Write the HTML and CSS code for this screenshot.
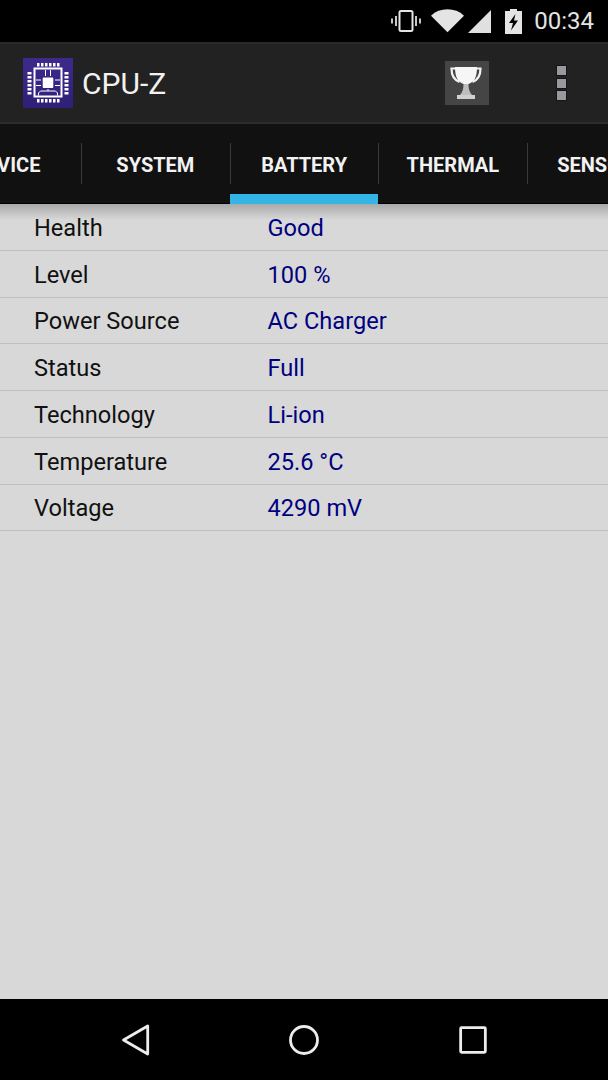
FILE: index.html
```html
<!DOCTYPE html>
<html lang="en">
<head>
<meta charset="utf-8">
<title>CPU-Z</title>
<link rel="stylesheet" href="styles.css">
</head>
<body>
<div class="screen">
  <header class="status">
    <svg class="ic-vibrate" width="32" height="24" viewBox="0 0 32 24"><rect x="9.500" y="2" width="13" height="20" rx="1.500" fill="none" stroke="#e4e4e4" stroke-width="2"/><path d="M5 7h2v10H5zM25 7h2v10h-2zM1 9.500h2v5H1zM29 9.500h2v5h-2z" fill="#c8c8c8"/></svg>
    <svg class="ic-wifi" width="33" height="24" viewBox="0 0 34 24"><path d="M0 6.500C4.500 2.200 10.500 0 17 0s12.500 2.200 17 6.500L17 23.500z" fill="#e4e4e4"/></svg>
    <svg class="ic-signal" width="23" height="23" viewBox="0 0 23 23"><path d="M0 23 23 0v23z" fill="#e0e0e0"/></svg>
    <svg class="ic-battery" width="17" height="25" viewBox="0 0 17 25"><path d="M5 0h7v2h5v23H0V2h5z" fill="#e4e4e4"/><path d="M10.500 5 4 14h4l-2 7.500L13 11.500H9z" fill="#000"/></svg>
    <span class="clock">00:34</span>
  </header>

  <div class="appbar">
    <svg class="logo" width="50" height="50" viewBox="0 0 50 50">
      <defs><linearGradient id="lg" x1="0" y1="0" x2="0" y2="1"><stop offset="0" stop-color="#3e2a8c"/><stop offset="1" stop-color="#2f1f78"/></linearGradient></defs>
      <rect width="50" height="50" fill="url(#lg)"/>
      <rect x="11.500" y="10.500" width="27" height="28" fill="none" stroke="#fff" stroke-width="2"/>
      <rect x="19.700" y="19.500" width="10.600" height="10.400" rx="1" fill="#fff"/>
      <g fill="#fff">
        <rect x="14" y="5" width="2.500" height="3.500"/><rect x="18" y="5" width="2.500" height="3.500"/><rect x="22" y="5" width="2.500" height="3.500"/><rect x="26" y="5" width="2.500" height="3.500"/><rect x="30" y="5" width="2.500" height="3.500"/><rect x="34" y="5" width="2.500" height="3.500"/>
        <rect x="14" y="41" width="2.500" height="3.500"/><rect x="18" y="41" width="2.500" height="3.500"/><rect x="22" y="41" width="2.500" height="3.500"/><rect x="26" y="41" width="2.500" height="3.500"/><rect x="30" y="41" width="2.500" height="3.500"/><rect x="34" y="41" width="2.500" height="3.500"/>
        <rect x="4.500" y="14" width="4" height="2.500"/><rect x="4.500" y="18" width="4" height="2.500"/><rect x="4.500" y="22" width="4" height="2.500"/><rect x="4.500" y="26" width="4" height="2.500"/><rect x="4.500" y="30" width="4" height="2.500"/><rect x="4.500" y="34" width="4" height="2.500"/>
        <rect x="41.500" y="14" width="4" height="2.500"/><rect x="41.500" y="18" width="4" height="2.500"/><rect x="41.500" y="22" width="4" height="2.500"/><rect x="41.500" y="26" width="4" height="2.500"/><rect x="41.500" y="30" width="4" height="2.500"/><rect x="41.500" y="34" width="4" height="2.500"/>
      </g>
      <g stroke="#fff" stroke-width="1" fill="none">
        <path d="M22.500 12v6M27.500 12v6M13 22h5M13 27.500h5M32 22h5M32 27.500h5"/>
        <path d="M15.500 37.500v-2.500l2-2h15l2 2v2.500M25 33v-2"/>
      </g>
    </svg>
    <h1 class="title">CPU-Z</h1>
    <div class="trophy">
      <svg width="36" height="36" viewBox="0 0 36 36">
        <path d="M7 3.500H2.500c0 6 1.500 11 8 13.500M27 3.500h4.500c0 6-1.500 11-8 13.500" fill="none" stroke="#f2f2f2" stroke-width="2.200"/>
        <path d="M6 2h22c0 9-2 14.500-8.500 17h-5C8 16.500 6 11 6 2z" fill="#f6f6f6"/>
        <path d="M14.500 19h5c0 5 1 8 3.500 11H11c2.500-3 3.500-6 3.500-11z" fill="#bdbdbd"/>
        <rect x="8" y="30" width="18" height="4" fill="#d0d0d0"/>
      </svg>
    </div>
    <div class="menu"><i></i><i></i><i></i></div>
  </div>

  <nav class="tabs">
    <div class="tab">DEVICE</div>
    <div class="tab">SYSTEM</div>
    <div class="tab active">BATTERY</div>
    <div class="tab">THERMAL</div>
    <div class="tab">SENSORS</div>
  </nav>

  <main class="list">
    <div class="row"><span class="key">Health</span><span class="val">Good</span></div>
    <div class="row"><span class="key">Level</span><span class="val">100 %</span></div>
    <div class="row"><span class="key">Power Source</span><span class="val">AC Charger</span></div>
    <div class="row"><span class="key">Status</span><span class="val">Full</span></div>
    <div class="row"><span class="key">Technology</span><span class="val">Li-ion</span></div>
    <div class="row"><span class="key">Temperature</span><span class="val">25.6 °C</span></div>
    <div class="row"><span class="key">Voltage</span><span class="val">4290 mV</span></div>
  </main>

  <footer class="nav">
    <svg width="32" height="32" viewBox="0 0 32 32"><path d="M28.700 2v28L4.500 16z" fill="none" stroke="#ececec" stroke-width="2.800" stroke-linejoin="round"/></svg>
    <svg width="32" height="32" viewBox="0 0 32 32"><circle cx="16" cy="16" r="13.500" fill="none" stroke="#ececec" stroke-width="2.800"/></svg>
    <svg width="32" height="32" viewBox="0 0 32 32"><rect x="3.650" y="3.650" width="24.700" height="24.700" rx="1" fill="none" stroke="#ececec" stroke-width="2.800" stroke-linejoin="round"/></svg>
  </footer>
</div>
</body>
</html>
```

FILE: styles.css
```css
* { box-sizing: border-box; }
html, body { margin: 0; padding: 0; }
body { background: #000; font-family: Roboto, "Liberation Sans", sans-serif; }
.screen { width: 608px; height: 1080px; display: flex; flex-direction: column; overflow: hidden; }

.status { height: 42px; flex: none; background: #000; display: flex; align-items: center; padding: 0 14px 0 0; justify-content: flex-end; }
.status svg { flex: none; display: block; }
.ic-vibrate { margin-right: 9px; }
.ic-wifi { margin-right: 4px; }
.ic-signal { margin-right: 14px; }
.ic-battery { margin-right: 12px; }
.clock { color: #e4e4e4; font-size: 24px; line-height: 42px; }

.appbar { height: 82px; flex: none; background: #222; border-top: 2px solid #2b2b2b; border-bottom: 2px solid #2c2c2c; display: flex; align-items: center; padding: 0 42px 0 23px; }
.logo { flex: none; display: block; }
.title { margin: 1px 0 0 9px; flex: 1; color: #f2f2f2; font-size: 30px; font-weight: 400; }
.trophy { width: 44px; height: 44px; background: #454545; display: flex; align-items: center; justify-content: center; margin-right: 68px; }
.menu { display: flex; flex-direction: column; gap: 3.500px; width: 9px; }
.menu i { display: block; width: 9px; height: 9px; background: #98989f; box-shadow: 0 0 0 1px #151515; }

.tabs { height: 80px; flex: none; background: linear-gradient(#111 79px, #000 79px); display: flex; margin-left: -67px; width: 750px; }
.tab { position: relative; width: 148.750px; flex: none; height: 80px; padding: 1px 1.500px 0 0; display: flex; align-items: center; justify-content: center; color: #f2f2f2; font-size: 20px; font-weight: 700; }
.tab::after { content: ""; position: absolute; right: 0; top: 19px; height: 41px; width: 1px; background: #3a3a3a; }
.tab.active::before { content: ""; position: absolute; left: -0.500px; right: 1px; bottom: 0; height: 10px; background: #33b5e5; }

.list { flex: 1; background: #d8d8d8 linear-gradient(#a9a9a9, #d8d8d8 16px) no-repeat; }
.row { height: 46.750px; display: grid; grid-template-columns: 233.500px 1fr; align-items: center; padding: 2px 0 0 34px; border-bottom: 1px solid #c0c0c0; font-size: 23.600px; }
.key { color: #111; }
.val { color: #00007f; }

.nav { height: 81px; flex: none; background: #000; display: flex; align-items: center; padding: 0 119px; justify-content: space-between; }
.nav svg { display: block; }
```
